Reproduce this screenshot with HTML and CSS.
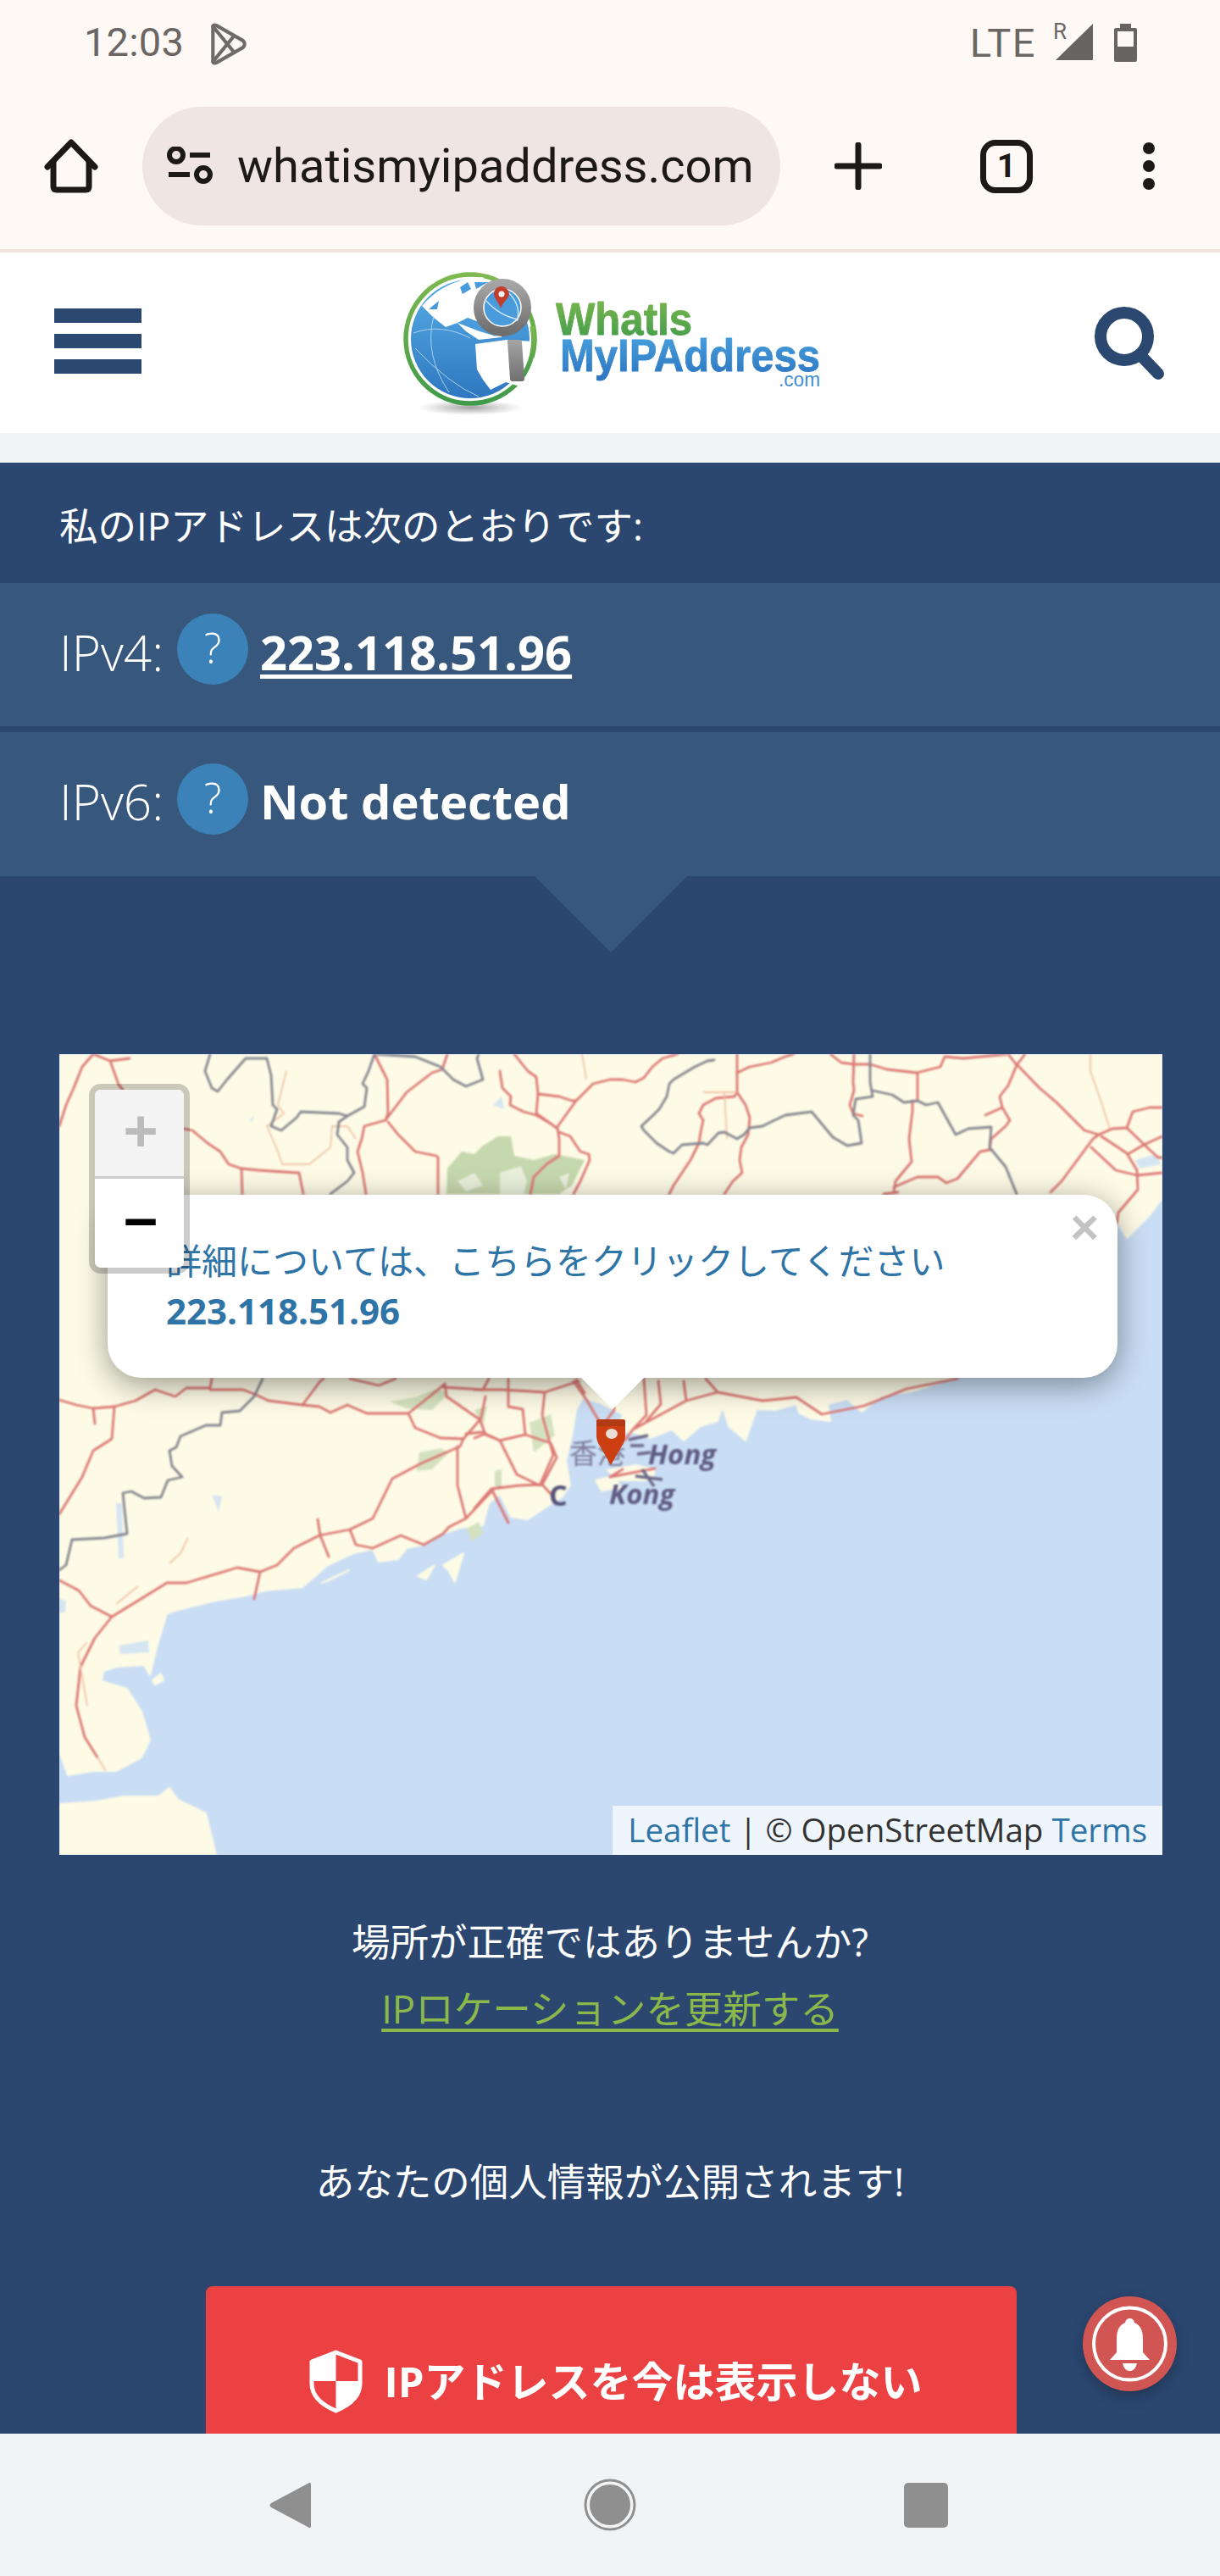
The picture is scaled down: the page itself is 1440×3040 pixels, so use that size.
FILE: index.html
```html
<!DOCTYPE html>
<html lang="ja">
<head>
<meta charset="utf-8">
<title>WhatIsMyIPAddress.com</title>
<link rel="stylesheet" href="styles.css">
</head>
<body>
<div class="page">
  <div class="chrome">
    <div class="status">
      <span class="time">12:03</span>
      <svg class="play" viewBox="0 0 44 50"><path class="s-gray" d="M5 6 Q5 2 9 4 L39 21 Q43 25 39 29 L9 46 Q5 48 5 44 Z"/><path class="s-gray" d="M5 5 L28 33 M5 45 L28 17"/></svg>
      <span class="status-gap"></span>
      <span class="lte">LTE</span>
      <span class="roam">R</span>
      <svg class="signal" viewBox="0 0 44 44"><path class="f-gray" d="M0 43 L44 0 V43 Z"/></svg>
      <svg class="battery" viewBox="0 0 27 45"><path class="f-gray" d="M7 0 H20 V5 H25 Q27 5 27 7 V43 Q27 45 25 45 H2 Q0 45 0 43 V7 Q0 5 2 5 H7 Z"/><rect class="f-cream" x="4" y="9" width="19" height="18"/></svg>
    </div>
    <div class="toolbar">
      <svg class="home" viewBox="0 0 64 64"><path class="s-ink" d="M4 33 L32 4 L60 33"/><path class="s-ink" d="M11 27 V56 Q11 60 15 60 H49 Q53 60 53 56 V27"/></svg>
      <div class="url">
        <svg class="tune" viewBox="0 0 54 46"><circle class="s-ink-thin" cx="11" cy="10" r="8"/><path class="s-ink-flat" d="M27 10 H51 M2 33 H27"/><circle class="s-ink-thin" cx="43" cy="33" r="8"/></svg>
        <span class="url-text">whatismyipaddress.com</span>
      </div>
      <svg class="plus" viewBox="0 0 56 56"><path class="s-ink" d="M28 3 V53 M3 28 H53"/></svg>
      <div class="tabs"><span>1</span></div>
      <svg class="dots" viewBox="0 0 14 56"><circle class="f-ink" cx="7" cy="7" r="7"/><circle class="f-ink" cx="7" cy="28" r="7"/><circle class="f-ink" cx="7" cy="49" r="7"/></svg>
    </div>
  </div>

  <header class="site">
    <div class="burger"><i></i><i></i><i></i></div>
    <svg class="logo" viewBox="0 0 560 200">
      <defs>
        <linearGradient id="gblue" x1="0" y1="0" x2="0" y2="1"><stop offset="0" stop-color="#57ade6"/><stop offset="1" stop-color="#2f77c0"/></linearGradient>
        <linearGradient id="ggreen" x1="0" y1="0" x2="0" y2="1"><stop offset="0" stop-color="#7fb950"/><stop offset="1" stop-color="#3f9a4a"/></linearGradient>
        <linearGradient id="gtext" x1="0" y1="0" x2="0" y2="1"><stop offset="0" stop-color="#4aa3df"/><stop offset="1" stop-color="#2c74c0"/></linearGradient>
        <linearGradient id="ggray" x1="0" y1="0" x2="0" y2="1"><stop offset="0" stop-color="#a5a5a5"/><stop offset="1" stop-color="#6f6f6f"/></linearGradient>
        <radialGradient id="gshadow"><stop offset="0" stop-color="#555" stop-opacity=".55"/><stop offset="1" stop-color="#777" stop-opacity="0"/></radialGradient>
      </defs>
      <ellipse cx="115" cy="178" rx="62" ry="9" fill="url(#gshadow)"/>
      <circle cx="115" cy="97" r="76" fill="none" stroke="url(#ggreen)" stroke-width="5.500"/>
      <circle cx="115" cy="97" r="70" fill="url(#gblue)"/>
      <path fill="#fff" d="M58 58 Q85 26 130 24 L155 60 L152 95 L125 98 L110 88 L100 78 L86 83 L72 72 Z"/>
      <path fill="#4a9bdc" d="M100 78 L112 72 L128 78 L146 94 L126 88 Z M103 36 L112 30 L116 38 L106 44 Z M66 62 L78 52 L76 62 Z M120 30 L136 30 L122 38 Z"/>
      <path fill="#fff" d="M121 103 L158 98 L190 100 L190 158 L157 148 L139 157 L130 145 L123 133 Z"/>
      <path fill="none" stroke="#a9d0ef" stroke-width="1" d="M50 108 Q90 150 125 165 M72 70 Q60 115 90 160 M48 90 Q80 78 115 96"/>
      <path fill="none" stroke="url(#ggreen)" stroke-width="5.500" d="M188 82 A76 76 0 0 1 174 145"/>
      <circle cx="153" cy="60" r="28" fill="#4a9bdc" stroke="url(#ggray)" stroke-width="12"/>
      <circle cx="153" cy="60" r="22" fill="#4a9bdc" stroke="#fff" stroke-width="1.500"/>
      <path fill="none" stroke="#cfe6f7" stroke-width="1.400" d="M134 52 Q150 70 172 74 M160 42 Q176 58 170 76"/>
      <path fill="#c33d2a" d="M152 35 C145 35 143 41 143 44 C143 49 149 54 151 61 C153 54 161 49 161 44 C161 41 158 35 152 35 Z"/>
      <circle cx="152" cy="44" r="3.500" fill="#fff"/>
      <path fill="url(#ggray)" d="M159 100 Q158 98 161 98 H173 Q176 98 176 101 L179 144 Q179 147 176 147 H165 Q162 147 162 144 Z"/>
      <text class="logo-text" x="216" y="92" textLength="161" lengthAdjust="spacingAndGlyphs" fill="url(#ggreen)" stroke="url(#ggreen)">WhatIs</text>
      <text class="logo-text" x="221" y="135" textLength="307" lengthAdjust="spacingAndGlyphs" fill="url(#gtext)" stroke="url(#gtext)">MyIPAddress</text>
      <text class="logo-com" x="479" y="153" textLength="49" lengthAdjust="spacingAndGlyphs">.com</text>
    </svg>
    <svg class="search" viewBox="0 0 84 86"><circle class="s-navy" cx="36" cy="35" r="28"/><path class="s-navy" d="M55 57 L76 79"/></svg>
  </header>
  <div class="strip"></div>

  <main class="content">
    <div class="lead">私のIPアドレスは次のとおりです:</div>
    <div class="iprow">
      <span class="ipl">IPv4:</span><span class="help">?</span><a class="ipv" href="#">223.118.51.96</a>
    </div>
    <div class="iprow second">
      <span class="ipl">IPv6:</span><span class="help">?</span><span class="ipv">Not detected</span>
    </div>

    <div class="map">
      <svg class="map-art" viewBox="0 0 1302 945">
        <rect class="sea" width="1302" height="945"/>
        <path class="land" d="M0 0 H1302 V170 L1287 190 L1260 217 L1250 200 L1200 300 L1053 383 L1007 398 L970 403 L947 422 L930 407 L907 413 L910 433 L887 430 L873 423 L870 413 L845 420 L823 419 L810 456 L790 439 L783 416 L777 433 L757 439 L737 456 L723 443 L697 453 L680 447 L660 445 L665 425 L640 412 L618 405 L610 420 L605 450 L598 480 L603 509 L593 523 L577 533 L553 549 L533 546 L520 519 L507 530 L500 556 L473 559 L453 566 L430 579 L410 583 L400 596 L377 599 L370 584 L347 589 L317 603 L310 609 L287 629 L243 633 L220 639 L180 646 L140 656 L127 660 L115 700 L107 733 L100 721 L67 723 L52 728 L50 740 L80 749 L97 776 L107 809 L97 830 L67 846 L40 846 L10 851 L0 823 Z"/>
        <path class="land" d="M0 885 L43 882 L77 876 L117 876 L130 866 L140 880 L173 896 L185 945 H0 Z M423 616 L443 603 L433 620 Z M453 603 L477 589 L467 623 L460 610 Z M310 624 L342 609 L320 620 Z M110 739 L120 731 L123 739 L113 744 Z M647 491 L680 485 L703 490 L700 503 L660 503 Z M633 503 L655 498 L663 512 L640 515 Z"/>
        <path class="water" d="M0 643 L8 645 L7 658 L0 660 Z M67 530 L74 530 L76 595 L70 595 Z M180 520 L192 522 L188 540 Z M225 78 L230 72 L228 80 Z M1270 125 L1295 118 L1300 130 L1275 135 Z M512 60 L522 50 L525 65 Z M70 698 L105 692 L106 706 L72 708 Z"/>
        <path class="forest" d="M457 165 L458 135 L475 115 L490 118 L500 108 L518 97 L533 97 L537 120 L560 125 L585 118 L620 125 L605 155 L590 165 Z"/>
        <path class="forest-light" d="M520 140 L545 132 L552 150 L548 165 L520 165 Z M470 150 L490 140 L500 155 L480 162 Z M590 145 L602 140 L598 160 Z"/>
        <path class="forest-small" d="M390 410 L420 405 L445 395 L460 400 L440 420 L410 418 Z M425 470 L450 465 L460 470 L440 490 L422 492 Z M481 560 L495 552 L500 565 L487 575 Z M514 492 L522 490 L522 510 L514 510 Z M555 435 L580 425 L585 450 L560 470 Z M490 420 L505 415 L500 440 Z"/>

        <g class="roads">
          <path d="M0 85 L8 60 L17 40 L27 15 L40 0 M40 0 L60 8 L83 5 M60 8 L70 36 L75 42"/>
          <path d="M147 88 L157 90 L175 105 L190 115 L200 130 L215 135 L235 137 L280 140 L283 140 L288 165 M215 135 L216 165"/>
          <path d="M372 0 L387 30 L388 70 L385 78 L360 85 L357 100 L352 115 L358 140 L362 165"/>
          <path d="M385 78 L410 45 L440 22 L452 18 L458 0 M388 80 L400 95 L420 115 L445 120 L447 122 L447 165"/>
          <path d="M537 0 L553 20 L563 27 L565 47 L563 70 L587 87 M520 20 L523 40 L533 50 L532 60 L548 68 L563 72 L580 82 L587 87"/>
          <path d="M565 47 L590 50 L605 55 L610 55 L625 40 L630 35 L650 30 L665 30 L680 33 L690 28 L700 15 L712 5 L730 0 M610 55 L587 87"/>
          <path d="M588 87 L590 100 L590 120 L575 130 L560 145 L556 165 M590 92 L603 97 L615 115 L625 118 L626 125 L615 150 L607 165"/>
          <path d="M800 0 L800 22 L800 45 L797 50 L775 52 L760 60 L755 70 L760 78 L757 92 L755 105 L745 125 L735 140 L725 155 L720 165"/>
          <path d="M800 22 L815 15 L840 10 L857 3 L867 0 M800 45 L810 60 L815 75 L813 95 L805 110 L803 125 L806 140 L795 150 L785 165"/>
          <path d="M910 0 L923 10 L938 12 L957 12 L977 18 L1012 22 L1040 15 L1045 3 L1067 5 L1120 0"/>
          <path d="M938 0 L937 33 L938 43 L933 60 L937 70 L948 73 M1013 22 L1013 53 M1007 55 L1007 67 L1003 100 L1006 127 L987 150 L985 163"/>
          <path d="M985 157 L1013 145 L1037 145 L1047 152 L1060 147 L1087 115 L1098 113 M973 165 L990 163"/>
          <path d="M1098 113 L1100 100 L1117 85 L1122 78 L1113 63 L1110 50 L1120 37 L1130 13 L1120 0 M1130 13 L1140 0 M1113 63 L1093 72"/>
          <path d="M1130 12 L1157 40 L1177 57 L1210 90 L1227 95 M1170 163 L1183 150 L1220 100 L1227 95 L1243 88 L1260 87 L1267 68 L1287 63 L1302 63"/>
          <path d="M1230 97 L1260 117 L1272 137 L1273 160 L1250 187 L1248 200 M1218 110 L1247 137 L1272 143 L1302 140 M1260 87 L1287 113 L1297 122 L1302 122 M1263 117 L1280 107 L1302 97"/>
          <path d="M0 408 L20 414 L40 418 L65 416 L90 409 L113 396 L137 404 L150 394 L178 394 L180 383 M178 396 L217 396 L230 401 L247 409 L287 414 L308 386 L312 383"/>
          <path d="M287 414 L307 416 L320 423 L340 414 L363 424 L412 424 L447 396 L455 389 M412 424 L420 441 L450 453 L477 454 M455 389 L457 404 L493 429 L497 431 L477 454"/>
          <path d="M503 404 L497 433 L503 449 L520 456 M480 448 L500 446 M453 393 L500 396 L507 383 M343 383 L377 391 L397 383"/>
          <path d="M40 418 L42 436 M65 416 L62 454 L40 468 L27 499 L0 543 M0 621 L23 633 L37 651 L62 664 L42 689 L25 723 L20 769 L30 806 L45 830"/>
          <path d="M62 664 L127 624 L150 624 L210 606 L237 611 L257 603 L277 583 L307 568 L343 561 L370 548 L393 501 L427 483 L473 463 L477 454"/>
          <path d="M237 611 L230 643 M305 549 L308 568 L318 593 M343 561 L350 579 L370 583 L403 568 L430 579 L453 566 L460 558 L480 548 L513 513 L520 511 M470 463 L470 509 L480 548"/>
          <path d="M490 396 L523 396 L573 399 L613 386 M530 383 L530 416 L547 419 L550 449 L520 456 L540 496 L567 509 L583 473 L570 426 L573 399"/>
          <path d="M490 453 L503 448 L520 456 L550 449 L580 459 L587 476 L570 508 L543 509 L510 513 L490 536 M510 513 L530 553 M570 508 L580 519"/>
          <path d="M607 386 L623 409 L637 433 M690 383 L693 426 L677 443 L667 456 M707 386 L710 413 L693 433 M737 386 L740 409 L677 443 M740 409 L777 399 L830 409 M763 383 L777 399"/>
          <path d="M610 384 L620 400 M650 384 L655 420 L640 440 M830 409 L870 405 L900 425 L950 415 L1000 395 L1060 383 M665 490 L650 499 L703 489"/>
        </g>
        <g class="roads-light">
          <path d="M268 20 L258 60 L265 70 L245 85 L258 115 L263 130 L295 130 L320 110 L322 85 L340 85 L350 100"/>
          <path d="M152 571 L143 589 L130 601 M93 628 L67 649 M33 694 L22 706 L33 769 M45 830 L55 846"/>
          <path d="M617 0 L622 30 M785 45 L788 100 M760 45 L800 45"/>
          <path d="M1217 0 L1217 20 L1230 57 L1240 88"/>
        </g>
        <g class="border">
          <path d="M178 0 L172 20 L180 40 L187 44 L198 30 L220 5 L245 5 L250 25 L252 60 L257 65 L250 85 L262 90 L280 75 L285 68 L330 70 L340 73 L360 62 L363 40 L358 35 L365 20 L372 0"/>
          <path d="M340 73 L330 80 L328 95 L340 110 L340 125 L348 140 L340 150 L320 165"/>
          <path d="M372 0 L420 3 L450 15 L465 30 L480 38 L500 30 L493 5 L495 0"/>
          <path d="M773 7 L765 8 L750 15 L725 30 L720 35 L717 50 L708 65 L700 73 L687 85 L690 90 L705 105 L720 115 L725 117 L735 107 L760 105 L765 107 L778 93 L785 92 L800 100 L808 95 L815 87 L830 85 L840 80 L857 72 L888 68 L913 98 L930 108 L947 105 L943 78 L937 72 L940 53 L960 50 L957 33 L957 0"/>
          <path d="M960 43 L983 48 L997 57 L1013 55 L1023 60 L1037 57 L1058 95 L1073 88 L1100 86 L1098 110 L1117 133 L1130 165"/>
          <path d="M240 383 L230 404 L213 421 L192 423 L190 438 L173 438 L143 451 L138 464 L130 468 L133 486 L145 499 L128 503 L120 523 L100 524 L85 516 L75 518 L80 566 L53 571 L15 573 L8 603 L0 609"/>
        </g>
        <text class="lbl-cjk" x="602" y="483">香港</text>
        <text class="lbl" x="695" y="484">Hong</text>
        <text class="lbl" x="649" y="531">Kong</text>
        <text class="lbl lbl-c" x="578" y="533">C</text>
        <path class="lbl-mark" d="M672 455 L695 450 M674 462 L690 462 M682 472 L698 470 M688 490 L702 510 M680 498 L712 502"/>
      </svg>
      <svg class="pin" viewBox="0 0 34 54"><path class="pin-body" d="M0 3 Q0 0 3 0 H31 Q34 0 34 3 V20 Q34 24 32 28 L17 54 L2 28 Q0 24 0 20 Z"/><path class="pin-top" d="M0 3 Q0 0 3 0 H31 Q34 0 34 3 V8 H0 Z"/><ellipse class="pin-hole" cx="18" cy="17" rx="7" ry="6"/></svg>

      <div class="zoomctl">
        <span class="zbtn off">+</span>
        <span class="zbtn">−</span>
      </div>

      <div class="popup">
        <span class="close">×</span>
        <div class="pop-text"><a href="#">詳細については、こちらをクリックしてください<br><b>223.118.51.96</b></a></div>
      </div>

      <div class="attr"><a href="#">Leaflet</a> | © OpenStreetMap <a href="#">Terms</a></div>
    </div>

    <p class="note q">場所が正確ではありませんか?</p>
    <p class="note"><a class="update" href="#">IPロケーションを更新する</a></p>
    <p class="note warn">あなたの個人情報が公開されます!</p>

    <div class="hidebtn">
      <svg class="shield" viewBox="0 0 63 75"><path class="shield-o" d="M31.500 3 L60 14 V40 Q60 60 31.500 72 Q3 60 3 40 V14 Z"/><path class="f-white" d="M31.500 3 V37 H3 V14 Z M31.500 37 H60 V40 Q60 60 31.500 72 Z"/></svg>
      <span class="hide-label">IPアドレスを今は表示しない</span>
    </div>
  </main>

  <nav class="sysnav">
    <svg class="nav-back" viewBox="0 0 49 57"><path class="f-nav" d="M47 2 Q49 1 49 4 V53 Q49 56 47 55 L2 31 Q-1 28.500 2 26 Z"/></svg>
    <svg class="nav-home" viewBox="0 0 62 62"><circle class="nav-ring" cx="31" cy="31" r="29"/><circle class="f-nav" cx="31" cy="31" r="24"/></svg>
    <div class="nav-square"></div>
  </nav>

  <div class="bell">
    <svg viewBox="0 0 111 112"><circle class="bell-ring" cx="55.500" cy="56" r="42.500"/><path class="f-white" d="M55.500 26 Q60 26 61 31 Q71 35 71 50 V66 L79 75 H32 L40 66 V50 Q40 35 50 31 Q51 26 55.500 26 Z M47 79 H64 Q62 88 55.500 88 Q49 88 47 79 Z"/></svg>
  </div>
</div>
</body>
</html>
```
FILE: styles.css
```css
* { box-sizing: border-box; }
html, body { margin: 0; padding: 0; }
body { width: 1440px; height: 3040px; overflow: hidden; font-family: "Open Sans", "Noto Sans CJK JP", sans-serif; color: #fff; background: #fff; }
p { margin: 0; }
a { color: inherit; }

.page { position: relative; width: 1440px; height: 3040px; display: flex; flex-direction: column; overflow: hidden; }

/* browser chrome */
.chrome { height: 298px; background: #fff9f6; border-bottom: 4px solid #f2e2dc; flex: none; }
.status { height: 126px; display: flex; padding: 0 98px 0 99px; align-items: flex-start; font-family: Roboto, sans-serif; color: #6a6664; }
.time { font-size: 47px; line-height: 50px; margin-top: 25px; letter-spacing: .2px; }
.play { width: 46px; height: 52px; margin: 26px 0 0 29px; }
.status-gap { flex: 1; }
.lte { font-size: 47px; line-height: 50px; margin-top: 26px; font-weight: 400; letter-spacing: 1.500px; }
.roam { font-size: 26px; line-height: 26px; margin: 24px 0 0 20px; }
.signal { width: 44px; height: 44px; margin: 28px 0 0 -13px; }
.battery { width: 27px; height: 45px; margin: 28px 0 0 25px; }
.s-gray { fill: none; stroke: #6f6b69; stroke-width: 4; stroke-linejoin: round; stroke-linecap: round; }
.f-gray { fill: #686462; }
.f-cream { fill: #fff9f6; }

.toolbar { height: 140px; display: flex; align-items: center; padding-left: 52px; }
.home { width: 64px; height: 64px; flex: none; }
.s-ink { fill: none; stroke: #1c1917; stroke-width: 7; stroke-linecap: round; stroke-linejoin: round; }
.s-ink-thin { fill: none; stroke: #1c1917; stroke-width: 6; }
.s-ink-flat { fill: none; stroke: #1c1917; stroke-width: 6; }
.f-ink { fill: #1c1917; }
.url { width: 753px; height: 140px; margin-left: 52px; border-radius: 70px; background: #efe5e2; display: flex; align-items: center; padding-left: 29px; overflow: hidden; flex: none; }
.tune { width: 54px; height: 46px; flex: none; }
.url-text { font-family: Roboto, sans-serif; font-size: 56px; color: #1c1917; margin-left: 29px; white-space: nowrap; }
.plus { width: 56px; height: 56px; margin-left: 64px; flex: none; }
.tabs { width: 62px; height: 63px; margin-left: 116px; border: 7px solid #1c1917; border-radius: 18px; display: flex; align-items: center; justify-content: center; font-family: Roboto, sans-serif; font-weight: 700; font-size: 39px; color: #1c1917; flex: none; }
.dots { width: 14px; height: 56px; margin-left: 130px; flex: none; }

/* site header */
.site { height: 213px; flex: none; background: #fff; display: flex; align-items: center; padding: 0 65px 0 64px; }
.burger { width: 103px; display: flex; flex-direction: column; gap: 13px; margin-top: -4px; }
.burger i { display: block; height: 17px; background: #2b4870; }
.logo { width: 560px; height: 200px; margin: -4px 0 0 273px; flex: none; }
.logo-text { font-family: "Liberation Sans", sans-serif; font-weight: 700; font-size: 53px; stroke-width: .8px; stroke-linejoin: round; }
.logo-com { font-family: "Liberation Sans", sans-serif; font-size: 23px; fill: #3f8fd2; }
.search { width: 84px; height: 86px; margin-left: auto; }
.s-navy { fill: none; stroke: #2b4870; stroke-width: 14; stroke-linecap: round; }
.strip { height: 35px; flex: none; background: #f1f3f4; }

/* main */
.content { height: 2326px; flex: none; background: #2b4770; overflow: hidden; display: flex; flex-direction: column; }
.lead { height: 142px; flex: none; display: flex; align-items: center; padding-left: 70px; font-size: 45.500px; padding-top: 2px; }
.iprow { position: relative; height: 169px; flex: none; background: #38577c; display: flex; align-items: center; padding: 0 0 8px 70px; }
.iprow.second { height: 170px; margin-top: 7px; }
.iprow.second::after { content: ""; position: absolute; left: 631px; top: 100%; border-style: solid; border-width: 90px 90px 0; border-color: #38577c transparent transparent; }
.ipl { font-size: 58.500px; font-weight: 300; width: 139px; flex: none; }
.help { width: 84px; height: 84px; border-radius: 50%; background: #3a82b7; display: flex; align-items: center; justify-content: center; font-size: 49px; font-weight: 300; margin-top: -5px; padding-bottom: 4px; flex: none; }
.ipv { font-size: 56px; font-weight: 700; margin-left: 14px; color: #fff; text-underline-offset: 5px; text-decoration-thickness: 5px; }

/* map */
.map { position: relative; height: 945px; margin: 210px 68px 0 70px; flex: none; overflow: hidden; background: #c9ddf4; }
.map-art { display: block; width: 1302px; height: 945px; filter: blur(.9px); }
.sea { fill: #c9ddf4; }
.land { fill: #fdfbe6; stroke: #fdfbe6; stroke-width: 2; stroke-linejoin: round; }
.water { fill: #d6e5f2; }
.forest { fill: #c6d8ae; }
.forest-light { fill: #eaf0dc; }
.forest-small { fill: #d5e2c0; }
.roads path { fill: none; stroke: #dc7773; stroke-width: 2.800; stroke-linejoin: round; stroke-linecap: round; }
.roads-light path { fill: none; stroke: #f0c3a8; stroke-width: 1.800; stroke-linejoin: round; }
.border path { fill: none; stroke: #85858f; stroke-width: 2.800; stroke-linejoin: round; stroke-linecap: round; }
.lbl { font-family: "Open Sans", sans-serif; font-weight: 700; font-style: italic; font-size: 33px; fill: #5e5a82; }
.lbl-c { font-style: normal; font-size: 34px; fill: #55527a; }
.lbl-cjk { font-family: "Noto Sans CJK TC", sans-serif; font-size: 33px; fill: #7e7d9c; }
.lbl-mark { fill: none; stroke: #6d6887; stroke-width: 3.500; }

.pin { position: absolute; left: 634px; top: 431px; width: 34px; height: 54px; }
.pin-body { fill: #cc3f12; }
.pin-top { fill: #b23a14; }
.pin-hole { fill: #eadcd6; }

.zoomctl { position: absolute; left: 35px; top: 35px; width: 119px; height: 224px; border: 7px solid rgba(0,0,0,.2); border-radius: 14px; background-clip: padding-box; display: flex; flex-direction: column; z-index: 3; }
.zbtn { height: 105px; display: flex; align-items: center; justify-content: center; background: #fff; font-family: "DejaVu Sans Mono", monospace; font-weight: 700; font-size: 66px; line-height: 1; color: #000; padding: 0 0 6px 3px; }
.zbtn:first-child { border-radius: 7px 7px 0 0; }
.zbtn:last-child { border-radius: 0 0 7px 7px; }
.zbtn.off { background: #f4f4f4; color: #bbb; border-bottom: 3px solid #ccc; }

.popup { position: absolute; left: 57px; top: 166px; width: 1192px; height: 216px; background: #fff; border-radius: 40px; box-shadow: 0 8px 37px rgba(0,0,0,.4); padding: 48px 69px 0; z-index: 2; color: #2f74a6; }
.popup::after { content: ""; position: absolute; left: 559px; top: 100%; border-style: solid; border-width: 37px 37.500px 0; border-color: #fff transparent transparent; }
.pop-text { font-size: 42px; line-height: 59px; white-space: nowrap; }
.pop-text a { text-decoration: none; }
.close { position: absolute; right: 22px; top: 6px; font-family: "Liberation Sans", sans-serif; font-weight: 700; font-size: 58px; line-height: 64px; color: #c3c3c3; }
.attr { position: absolute; right: 0; bottom: 0; height: 58px; padding: 0 18px; background: rgba(255,255,255,.7); font-size: 38.500px; line-height: 56px; color: #333; white-space: nowrap; z-index: 1; }
.attr a { color: #2f74a6; text-decoration: none; }

/* texts below */
.note { font-size: 45.500px; line-height: 79px; text-align: center; }
.q { margin-top: 63px; }
.update { color: #8ab84a; text-decoration-thickness: 4px; text-underline-offset: 6px; }
.warn { margin-top: 125px; }
.hidebtn { width: 957px; height: 224px; flex: none; margin: 84px 0 0 243px; background: #ec4143; border-radius: 8px; display: flex; align-items: center; justify-content: center; gap: 27px; padding-left: 10px; font-size: 49px; font-weight: 700; }
.hide-label { margin-bottom: 6px; margin-left: -1px; }
.shield { width: 63px; height: 75px; flex: none; margin-top: 0; }
.shield-o { fill: none; stroke: #fff; stroke-width: 5; stroke-linejoin: round; }
.f-white { fill: #fff; }

/* android nav */
.sysnav { height: 168px; flex: none; background: #f2f3f5; display: flex; align-items: center; padding-left: 318px; }
.nav-back { width: 49px; height: 57px; flex: none; }
.nav-home { width: 62px; height: 62px; margin-left: 322px; flex: none; }
.nav-square { width: 52px; height: 53px; margin-left: 316px; background: #8f8f8f; border-radius: 5px; flex: none; }
.f-nav { fill: #8f8f8f; }
.nav-ring { fill: none; stroke: #8f8f8f; stroke-width: 3; }

.bell { position: absolute; left: 1278px; top: 2710px; width: 111px; height: 112px; border-radius: 50%; background: #d05553; box-shadow: 0 6px 16px rgba(0,0,0,.25); }
.bell svg { display: block; width: 111px; height: 112px; }
.bell-ring { fill: none; stroke: #fff; stroke-width: 4; }
```
